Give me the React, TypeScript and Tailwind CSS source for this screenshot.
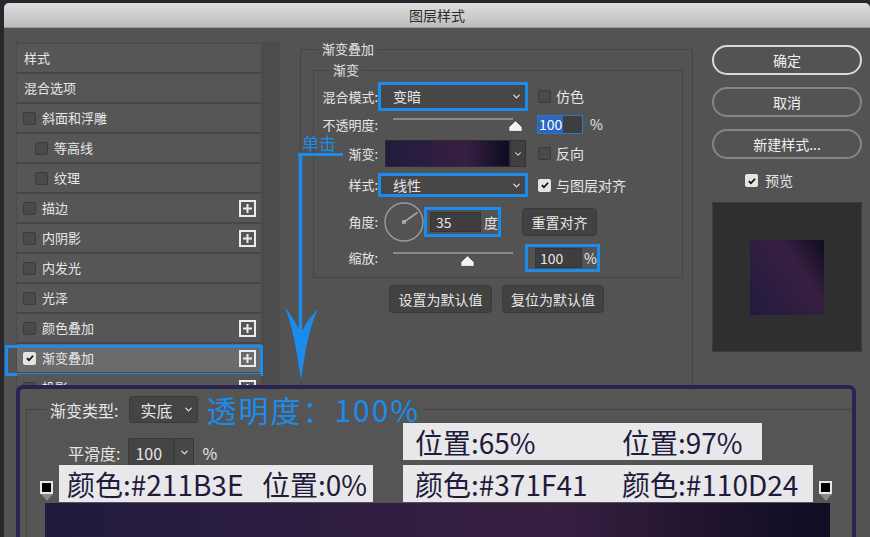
import React from 'react';
import { ChevronDown } from 'lucide-react';

const Checkbox = ({ checked = false }: { checked?: boolean }) =>
  checked ? (
    <span className="w-[13px] h-[13px] shrink-0 rounded-[2px] bg-[#e4e4e4] flex items-center justify-center">
      <svg viewBox="0 0 12 12" className="w-[10px] h-[10px]">
        <path d="M2.2 6.2l2.5 2.5 5-5.4" stroke="#111" strokeWidth="2.2" fill="none" />
      </svg>
    </span>
  ) : (
    <span className="block w-[13px] h-[13px] shrink-0 rounded-[2px] bg-[#4a4a4a] border border-[#3b3b3b]" />
  );

const PlusBox = () => (
  <span className="ml-auto mr-[5px] w-[17px] h-[17px] border-2 border-[#ececec] flex items-center justify-center">
    <svg viewBox="0 0 9 9" className="w-[9px] h-[9px]">
      <path d="M4.5 0v9M0 4.5h9" stroke="#ececec" strokeWidth="2" />
    </svg>
  </span>
);

const Thumb = () => (
  <svg viewBox="0 0 15 12" className="w-[15px] h-[12px]">
    <path d="M7.5 0.8 L14.2 7 L14.2 11.4 L0.8 11.4 L0.8 7 Z" fill="#f4f4f4" stroke="#333" strokeWidth="0.8" strokeLinejoin="round" />
  </svg>
);

const rows = [
  { label: '样式' },
  { label: '混合选项' },
  { label: '斜面和浮雕', cb: true },
  { label: '等高线', cb: true, indent: true },
  { label: '纹理', cb: true, indent: true },
  { label: '描边', cb: true, plus: true },
  { label: '内阴影', cb: true, plus: true },
  { label: '内发光', cb: true },
  { label: '光泽', cb: true },
  { label: '颜色叠加', cb: true, plus: true },
  { label: '渐变叠加', cb: true, plus: true, checked: true, active: true },
  { label: '投影', cb: true, plus: true },
];

const grad = 'bg-[linear-gradient(90deg,#211B3E_0%,#371F41_65%,#110D24_97%)]';

const Stop = () => (
  <div className="flex flex-col items-center self-end mb-[1px]">
    <span className="w-[13px] h-[13px] bg-black border-2 border-[#e5e5e5]" />
    <span className="w-0 h-0 border-l-[6px] border-r-[6px] border-t-[7px] border-l-transparent border-r-transparent border-t-[#8a8a8a]" />
  </div>
);

export default function App() {
  return (
    <div className="relative w-[870px] h-[537px] overflow-hidden bg-[#29272d] font-['Noto_Sans_CJK_SC',sans-serif] text-[13px] text-[#e6e6e6]">
      <div className="ml-[4px] mt-[3px] h-[534px] bg-[#535353] rounded-t-[5px] flex flex-col">
        {/* title bar */}
        <div className="h-[25px] rounded-t-[5px] bg-[linear-gradient(#dedede,#bdbdbd)] flex items-center justify-center text-[14px] text-[#2c2c2c] border-b border-[#9a9a9a]">
          图层样式
        </div>

        <div className="flex items-start">
          {/* style list */}
          <div className="ml-[12px] mt-[14px] w-[264px] h-[360px] bg-[#4c4c4c] pt-[2px] pl-[1px]">
            {rows.map((r) => (
              <div
                key={r.label}
                className={`relative w-[244px] h-[30px] border-b-2 border-[#474747] flex items-center ${
                  r.active ? 'bg-[#6b6b6b]' : 'bg-[#565656]'
                } ${r.indent ? 'pl-[18px]' : r.cb ? 'pl-[6px]' : 'pl-[7px]'}`}
              >
                {r.cb && <Checkbox checked={r.checked} />}
                <span className={r.cb ? 'ml-[6px]' : ''}>{r.label}</span>
                {r.plus && <PlusBox />}
                {r.active && (
                  <span className="absolute -left-[12px] -right-[2px] top-[1px] h-[31px] border-[3px] border-[#1b8ceb]" />
                )}
              </div>
            ))}
          </div>

          {/* settings */}
          <fieldset className="ml-[20px] mt-[12px] w-[393px] h-[360px] min-w-0 border border-b-0 border-[#444]">
            <legend className="ml-[18px] px-[3px] leading-[18px] text-[#e2e2e2]">渐变叠加</legend>
            <fieldset className="ml-[12px] mt-[3px] w-[370px] min-w-0 border border-[#444] pb-[5px]">
              <legend className="ml-[16px] px-[3px] leading-[18px] text-[#e2e2e2]">渐变</legend>

              <div className="flex items-center h-[29px] mt-[3px]">
                <span className="w-[64px] text-right shrink-0">混合模式:</span>
                <div className="w-[150px] h-[29px] border-[3px] border-[#1b8ceb] bg-[#474747] flex items-center pl-[12px] pr-[3px]">
                  <span className="text-[14px]">变暗</span>
                  <ChevronDown className="ml-auto w-[11px] h-[11px]" strokeWidth={2.5} />
                </div>
                <span className="ml-[10px]"><Checkbox /></span>
                <span className="ml-[5px] text-[14px]">仿色</span>
              </div>

              <div className="flex items-center h-[27px]">
                <span className="w-[64px] text-right shrink-0">不透明度:</span>
                <div className="relative ml-[15px] w-[144px] h-full shrink-0">
                  <span className="absolute left-0 top-[7px] w-[120px] h-[2px] bg-[#8a8a8a]" />
                  <span className="absolute left-[115px] top-[9px] flex"><Thumb /></span>
                </div>
                <div className="w-[46px] h-[19px] border border-[#2f72c9] bg-[#3e3e3e] flex items-center">
                  <span className="bg-[#2c66bd] px-[1px] text-[14px] leading-[17px] text-white">100</span>
                </div>
                <span className="ml-[7px] text-[14px]">%</span>
              </div>

              <div className="flex items-center h-[27px] mt-[2px]">
                <span className="w-[64px] text-right shrink-0">渐变:</span>
                <div className={`ml-[7px] w-[125px] h-[27px] border border-[#2c2c2c] ${grad}`} />
                <div className="w-[16px] h-[27px] bg-[#404040] border border-[#333] flex items-center justify-center">
                  <ChevronDown className="w-[10px] h-[10px]" strokeWidth={2.5} />
                </div>
                <span className="ml-[12px]"><Checkbox /></span>
                <span className="ml-[5px] text-[14px]">反向</span>
              </div>

              <div className="flex items-center h-[24px] mt-[6px]">
                <span className="w-[64px] text-right shrink-0">样式:</span>
                <div className="w-[150px] h-[24px] border-[3px] border-[#1b8ceb] bg-[#474747] flex items-center pl-[12px] pr-[3px]">
                  <span className="text-[14px]">线性</span>
                  <ChevronDown className="ml-auto w-[11px] h-[11px]" strokeWidth={2.5} />
                </div>
                <span className="ml-[10px]"><Checkbox checked /></span>
                <span className="ml-[5px] text-[14px]">与图层对齐</span>
              </div>

              <div className="flex items-center h-[40px] mt-[5px]">
                <span className="w-[64px] text-right shrink-0">角度:</span>
                <svg viewBox="0 0 40 40" className="ml-[6px] w-[40px] h-[40px] shrink-0">
                  <circle cx="20" cy="20" r="19" fill="none" stroke="#9c9c9c" strokeWidth="1.4" />
                  <path d="M20 20 L33.5 10.5" stroke="#a8a8a8" strokeWidth="1.6" />
                  <circle cx="20" cy="20" r="2.2" fill="#a8a8a8" />
                </svg>
                <div className="w-[77px] h-[30px] border-[3px] border-[#1b8ceb] flex items-center">
                  <div className="ml-[3px] w-[52px] h-[20px] bg-[#3e3e3e] border border-[#363636] flex items-center pl-[5px] text-[14px]">35</div>
                  <span className="ml-[3px] text-[14px]">度</span>
                </div>
                <button className="ml-[21px] w-[75px] h-[28px] bg-[#424242] border border-[#3a3a3a] rounded-[4px] text-[14px] text-[#e6e6e6]">重置对齐</button>
              </div>

              <div className="flex items-center h-[28px] mt-[2px]">
                <span className="w-[64px] text-right shrink-0">缩放:</span>
                <div className="relative ml-[15px] w-[132px] h-full shrink-0">
                  <span className="absolute left-0 top-[8px] w-[120px] h-[2px] bg-[#8a8a8a]" />
                  <span className="absolute left-[67px] top-[11px] flex"><Thumb /></span>
                </div>
                <div className="w-[75px] h-[28px] border-[3px] border-[#1b8ceb] flex items-center">
                  <div className="ml-[7px] w-[47px] h-[20px] bg-[#3e3e3e] border border-[#363636] flex items-center pl-[4px] text-[14px]">100</div>
                  <span className="ml-[2px] text-[14px]">%</span>
                </div>
              </div>
            </fieldset>

            <div className="mt-[7px] ml-[88px] flex gap-[10px]">
              <button className="w-[103px] h-[28px] bg-[#424242] border border-[#3a3a3a] rounded-[4px] text-[14px] text-[#e6e6e6]">设置为默认值</button>
              <button className="w-[102px] h-[28px] bg-[#424242] border border-[#3a3a3a] rounded-[4px] text-[14px] text-[#e6e6e6]">复位为默认值</button>
            </div>
          </fieldset>

          {/* right column */}
          <div className="ml-[19px] mt-[17px] w-[150px] flex flex-col">
            <div className="flex flex-col gap-[12px]">
              <button className="h-[30px] rounded-full border-2 border-[#dadada] text-[14px] text-[#f0f0f0]">确定</button>
              <button className="h-[30px] rounded-full border-2 border-[#858585] text-[14px] text-[#f0f0f0]">取消</button>
              <button className="h-[30px] rounded-full border-2 border-[#858585] text-[14px] text-[#f0f0f0]">新建样式...</button>
            </div>
            <div className="mt-[15px] pl-[33px] h-[13px] flex items-center">
              <Checkbox checked />
              <span className="ml-[7px] text-[14px]">预览</span>
            </div>
            <div className="mt-[15px] w-[150px] h-[150px] bg-[#2f2f2f] border border-[#3d3d3d] flex items-center justify-center">
              <div className="w-[74px] h-[75px] bg-[linear-gradient(55deg,#211B3E_0%,#371F41_65%,#110D24_97%)]" />
            </div>
          </div>
        </div>
      </div>

      {/* click annotation */}
      <span className="absolute left-[302px] top-[134px] text-[17px] leading-none text-[#1b8ceb]">单击</span>
      <svg className="absolute left-[280px] top-[130px]" width="70" height="260" viewBox="0 0 70 260">
        <path d="M18 24.5 H63" stroke="#1b8ceb" strokeWidth="3" />
        <path d="M20.5 23 V210" stroke="#1b8ceb" strokeWidth="3.5" />
        <path d="M21 251 C17 220 12 195 5 177 C13 188 17 195 19 200 L23 200 C25 195 29 188 38 179 C30 195 25 220 21 251 Z" fill="#1b8ceb" />
      </svg>

      {/* gradient editor overlay */}
      <div className="absolute left-[16px] top-[385px] w-[840px] h-[160px] border-[4px] border-[#2a2250] rounded-t-[7px] bg-[#555555] pl-[6px] pt-[7px] text-[16px]">
        <fieldset className="min-w-0 border-t border-l border-[#444]">
          <legend className="ml-[20px] px-[3px]">
            <div className="flex items-center h-[27px]">
              <span className="text-[#e8e8e8]">渐变类型:</span>
              <div className="ml-[11px] w-[69px] h-[27px] bg-[#444] border border-[#3a3a3a] rounded-[3px] flex items-center pl-[10px] pr-[3px]">
                <span>实底</span>
                <ChevronDown className="ml-auto w-[11px] h-[11px]" strokeWidth={2.5} />
              </div>
              <span className="ml-[8px] text-[30px] leading-[27px] tracking-[2px] text-[#1b8ceb]">透明度：100%</span>
            </div>
          </legend>

          <div className="flex items-start h-[37px]">
            <div className="w-[376px] shrink-0 pl-[41px] mt-[15px] h-[29px] flex items-center">
              <span>平滑度:</span>
              <div className="ml-[8px] w-[46px] h-[29px] bg-[#444] border border-[#3a3a3a] flex items-center pl-[6px]">100</div>
              <div className="w-[20px] h-[29px] bg-[#474747] border border-[#3a3a3a] flex items-center justify-center">
                <ChevronDown className="w-[11px] h-[11px]" strokeWidth={2.5} />
              </div>
              <span className="ml-[8px]">%</span>
            </div>
            <div className="w-[359px] h-[37px] bg-[#e8e8ea] flex items-center pl-[12px] text-[28px] leading-none text-[#221a3a]">
              <span className="w-[207px]">位置:65%</span>
              <span>位置:97%</span>
            </div>
          </div>

          <div className="flex mt-[5px] h-[37px]">
            <div className="ml-[13px] flex"><Stop /></div>
            <div className="ml-[6px] w-[314px] h-[37px] bg-[#e8e8ea] flex items-center pl-[8px] text-[28px] leading-none text-[#221a3a]">
              <span className="w-[195px]">颜色:#211B3E</span>
              <span>位置:0%</span>
            </div>
            <div className="ml-[30px] w-[410px] h-[37px] bg-[#e8e8ea] flex items-center pl-[12px] text-[28px] leading-none text-[#221a3a]">
              <span className="w-[207px]">颜色:#371F41</span>
              <span>颜色:#110D24</span>
            </div>
            <div className="ml-[6px] flex"><Stop /></div>
          </div>

          <div className={`mt-[1px] ml-[18px] w-[785px] h-[40px] ${grad}`} />
        </fieldset>
      </div>
    </div>
  );
}
